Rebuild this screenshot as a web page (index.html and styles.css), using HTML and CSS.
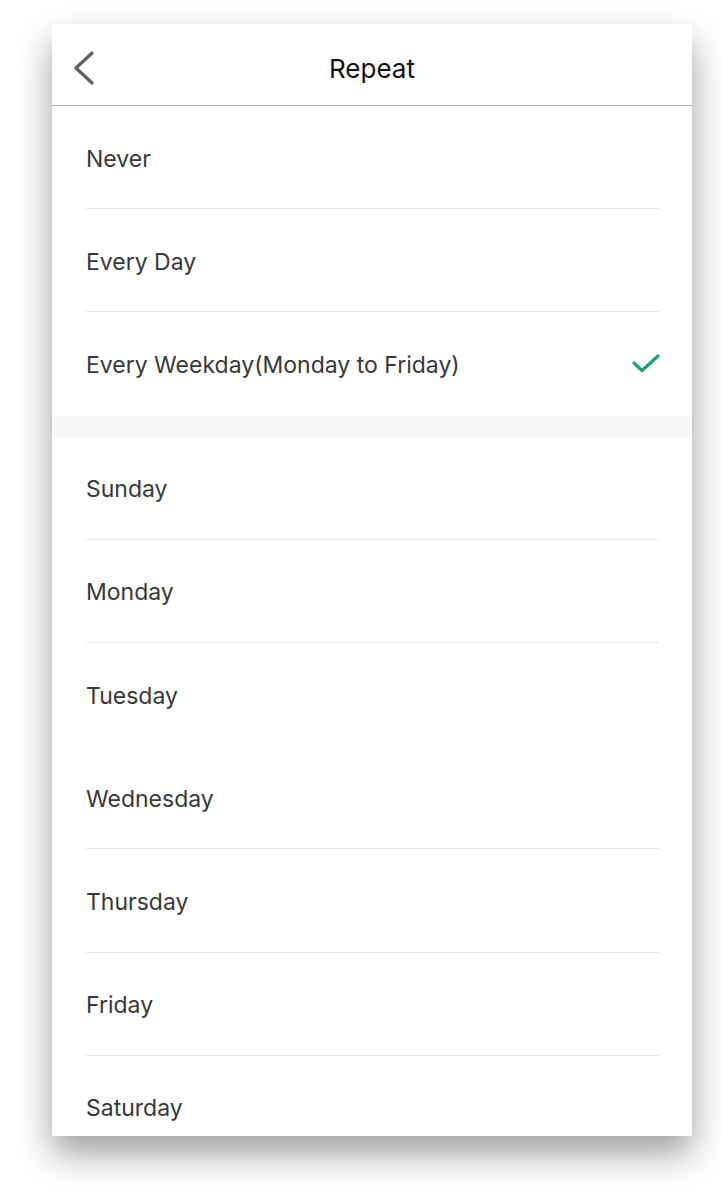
FILE: index.html
```html
<!DOCTYPE html>
<html lang="en">
<head>
    <meta charset="UTF-8">
    <meta name="viewport" content="width=device-width, initial-scale=1.0">
    <title>Repeat</title>
    <link rel="stylesheet" href="styles.css">
</head>
<body>
    <div class="phone">
        <div class="nav-bar">
            <a class="back" href="#">
                <svg width="24" height="34" viewBox="0 0 24 34">
                    <path d="M20 2 L4 17 L20 32" fill="none" stroke="#5f5f5f" stroke-width="3.2" stroke-linecap="round" stroke-linejoin="round"/>
                </svg>
            </a>
            <h1 class="title">Repeat</h1>
        </div>

        <ul class="list">
            <li class="item">Never</li>
            <li class="item">Every Day</li>
            <li class="item last selected">
                <span>Every Weekday(Monday to Friday)</span>
                <svg class="check" width="28" height="20" viewBox="0 0 28 20">
                    <path d="M2 10 L10 17.5 L26 3" fill="none" stroke="#16a56f" stroke-width="3.2" stroke-linecap="round" stroke-linejoin="round"/>
                </svg>
            </li>
        </ul>

        <div class="gap"></div>

        <ul class="list">
            <li class="item">Sunday</li>
            <li class="item">Monday</li>
            <li class="item last">Tuesday</li>
            <li class="item">Wednesday</li>
            <li class="item">Thursday</li>
            <li class="item">Friday</li>
            <li class="item last">Saturday</li>
        </ul>
    </div>
</body>
</html>
```

FILE: styles.css
```css
html, body {
    min-height: 1193px;
}

body {
    margin: 0;
    padding: 24px 0 57px 52px;
    box-sizing: border-box;
    background: #fff;
    font-family: Inter, "Liberation Sans", sans-serif;
}

.phone {
    width: 640px;
    height: 1112px;
    background: #fff;
    overflow: hidden;
    box-shadow: 0 18px 34px rgba(0, 0, 0, 0.38);
}

.nav-bar {
    height: 82px;
    padding-top: 7px;
    box-sizing: border-box;
    border-bottom: 1px solid #b8b8b8;
    display: flex;
    align-items: center;
    justify-content: center;
    position: relative;
}

.back {
    position: absolute;
    left: 20px;
    top: 27px;
    display: block;
    line-height: 0;
}

.title {
    margin: 0;
    font-size: 26px;
    font-weight: 400;
    color: #111;
}

.list {
    list-style: none;
    margin: 0;
    padding: 0 33px 0 34px;
}

.item {
    height: 99.2px;
    padding-top: 3px;
    border-bottom: 1px solid #e8e8e8;
    display: flex;
    align-items: center;
    justify-content: space-between;
    font-size: 23px;
    color: #383838;
}

.item.last {
    border-bottom-color: transparent;
}

.check {
    margin: -3px -1px 0 0;
}

.gap {
    height: 21px;
    background: #f5f5f5;
}
```
